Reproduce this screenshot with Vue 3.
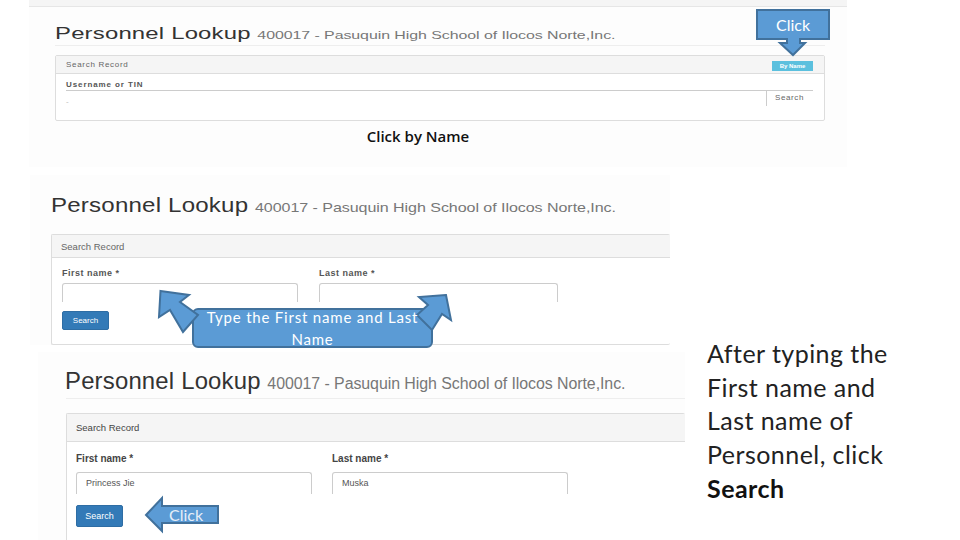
<script setup>
const lines = ['After typing the', 'First name and', 'Last name of', 'Personnel, click']
</script>

<template>
  <main class="slide">
    <section class="shot shot-a">
      <div class="strip"></div>
      <h1 class="title"><span class="big">Personnel Lookup</span> <small>400017 - Pasuquin High School of Ilocos Norte,Inc.</small></h1>
      <div class="rule"></div>
      <div class="panel">
        <div class="panel-head">
          <span>Search Record</span>
          <span class="badge">By Name</span>
        </div>
        <div class="panel-body">
          <label>Username or TIN</label>
          <div class="tin">
            <span class="tin-dash">-</span>
            <span class="addon">Search</span>
          </div>
        </div>
      </div>
      <p class="caption">Click by Name</p>
    </section>

    <section class="shot shot-b">
      <h1 class="title"><span class="big">Personnel Lookup</span> <small>400017 - Pasuquin High School of Ilocos Norte,Inc.</small></h1>
      <div class="panel">
        <div class="panel-head"><span>Search Record</span></div>
        <div class="panel-body">
          <div class="fields">
            <div class="field"><label>First name *</label><div class="input"></div></div>
            <div class="field"><label>Last name *</label><div class="input wide"></div></div>
          </div>
          <button class="btn">Search</button>
        </div>
      </div>
    </section>

    <section class="shot shot-c">
      <h1 class="title"><span class="big">Personnel Lookup</span> <small>400017 - Pasuquin High School of Ilocos Norte,Inc.</small></h1>
      <div class="rule"></div>
      <div class="panel">
        <div class="panel-head"><span>Search Record</span></div>
        <div class="panel-body">
          <div class="fields">
            <div class="field"><label>First name *</label><div class="input">Princess Jie</div></div>
            <div class="field"><label>Last name *</label><div class="input">Muska</div></div>
          </div>
          <button class="btn">Search</button>
        </div>
      </div>
    </section>

    <svg class="shapes" width="960" height="540" viewBox="0 0 960 540" aria-hidden="true">
      <path class="shape" d="M757 10H829V39H800V43H805L793 55L780 43H787V39H757Z" />
      <rect class="shape" x="193" y="309" width="239" height="38" rx="5" />
      <path class="shape" d="M160.500 291L189 295L180 302L198 315L183 332L170 310L159 317Z" />
      <path class="shape" d="M446 295L419 297L428 305L417 315L432 330L442 314L451 320Z" />
      <path class="shape" d="M146 515L162 498V506H218V523H162V531Z" />
    </svg>

    <div class="note note-a">Click</div>
    <div class="note note-b">Type the First name and Last<br />Name</div>
    <div class="note note-c">Click</div>

    <aside class="side">
      <div v-for="line in lines" :key="line">{{ line }}</div>
      <strong>Search</strong>
    </aside>
  </main>
</template>

<style scoped>
.slide {
  position: relative;
  width: 960px;
  height: 540px;
  overflow: hidden;
  background: #fff;
  font-family: "Liberation Sans", Arial, sans-serif;
}
.shot {
  position: absolute;
  box-sizing: border-box;
  overflow: hidden;
  background: #fdfdfd;
  color: #333;
}
.shot-a { left: 29px; top: 0; width: 818px; height: 167px; padding-left: 26px; }
.shot-b { left: 30px; top: 175px; width: 640px; height: 170px; padding-left: 21px; }
.shot-c { left: 38px; top: 352px; width: 647px; height: 188px; padding-left: 27px; }

.strip { height: 6px; margin: 0 0 0 -26px; background: #f5f5f5; border-bottom: 1px solid #e6e6e6; }
.title {
  margin: 0;
  width: 600px;
  font-weight: 400;
  font-size: 24px;
  line-height: 28px;
  white-space: nowrap;
  transform-origin: 0 50%;
}
.big { letter-spacing: .2px; }
.title small { font-size: 16px; letter-spacing: -.06px; color: #777; }
.shot-a .title { margin-top: 12px; transform: scale(.995, .68); }
.shot-b .title { margin-top: 16px; transform: scale(1.003, .82); }
.shot-c .title { margin-top: 15px; transform: scaleX(.995); }
.rule { height: 1px; background: #eee; margin-right: 22px; }
.shot-a .rule { margin-top: -5px; }
.shot-c .rule { margin-top: 0; margin-left: 1px; margin-right: 0; }

.panel { box-sizing: border-box; border: 1px solid #ddd; border-radius: 2px; background: #fff; }
.panel-head {
  display: flex;
  justify-content: space-between;
  align-items: center;
  background: #f5f5f5;
  border-bottom: 1px solid #ddd;
}
label { display: block; font-weight: 700; }

.shot-a .panel { width: 770px; height: 66px; margin-top: 9px; }
.shot-a .panel-head { height: 17px; padding: 0 11px 0 10px; font-size: 8px; letter-spacing: .7px; color: #666; }
.badge {
  display: block;
  width: 41px;
  height: 10px;
  margin-top: 2px;
  background: #5bc0de;
  color: #fff;
  font-size: 6px;
  font-weight: 700;
  letter-spacing: 0;
  line-height: 10px;
  text-align: center;
}
.shot-a .panel-body { padding: 5px 11px 0 10px; font-size: 8px; }
.shot-a label { line-height: 11px; color: #555; letter-spacing: .9px; }
.tin { display: flex; justify-content: space-between; height: 15px; border-top: 1px solid #ccc; }
.tin-dash { align-self: flex-end; color: #bbb; line-height: 8px; }
.addon { width: 47px; box-sizing: border-box; padding-left: 8px; border-left: 1px solid #ccc; line-height: 14px; color: #666; letter-spacing: .6px; }
.caption {
  margin: 6px 0 0;
  width: 726px;
  text-align: center;
  font: 600 15px/18px "Open Sans", sans-serif;
  color: #111;
}

.shot-b .panel { width: 619px; height: 111px; margin-top: 12px; border-right: 0; }
.shot-b .panel-head { height: 22px; padding: 0 9px; font-size: 9.500px; color: #666; }
.shot-b .panel-body { padding: 10px 10px 0; }
.shot-b .fields { gap: 21px; }
.shot-b label { font-size: 9px; line-height: 11px; letter-spacing: .5px; color: #555; }
.shot-b .input { width: 236px; height: 19px; margin-top: 4px; }
.shot-b .input.wide { width: 239px; }
.shot-b .btn { margin-top: 9px; width: 47px; height: 19px; font-size: 8px; }

.shot-c .panel { width: 619px; height: 140px; margin-top: 14px; margin-left: 1px; border-right: 0; border-bottom: 0; }
.shot-c .panel-head { height: 27px; padding: 0 9px; font-size: 9.500px; color: #444; }
.shot-c .panel-body { padding: 11px 9px 0; }
.shot-c .fields { gap: 20px; }
.shot-c label { font-size: 10px; line-height: 12px; color: #444; }
.shot-c .input { width: 236px; height: 22px; margin-top: 7px; padding-left: 9px; font-size: 9px; line-height: 20px; color: #555; }
.shot-c .btn { margin-top: 11px; width: 47px; height: 22px; font-size: 9px; }

.fields { display: flex; }
.input {
  box-sizing: border-box;
  border: 1px solid #ccc;
  border-bottom: 0;
  border-radius: 3px 3px 0 0;
  background: #fff;
}
.btn {
  display: block;
  padding: 0;
  border: 1px solid #2e6da4;
  border-radius: 2px;
  background: #337ab7;
  color: #fff;
  font-family: inherit;
}

.shapes { position: absolute; left: 0; top: 0; }
.shape { fill: #5b9bd5; stroke: #41719c; stroke-width: 2; }

.note {
  position: absolute;
  font-family: Lato, "Open Sans", sans-serif;
  color: #fff;
  text-align: center;
  font-size: 16px;
}
.note-a { left: 756px; top: 15px; width: 74px; line-height: 19px; }
.note-b { left: 192px; top: 306px; width: 241px; font-size: 15px; line-height: 22px; letter-spacing: .8px; }
.note-c { left: 162px; top: 505px; width: 48px; line-height: 19px; color: #e6eef8; }

.side {
  position: absolute;
  left: 707px;
  top: 337px;
  font-family: Lato, "Open Sans", sans-serif;
  font-size: 25px;
  line-height: 33.700px;
  letter-spacing: .45px;
  color: #222;
}
.side strong { display: block; font-weight: 700; color: #111; }
</style>
